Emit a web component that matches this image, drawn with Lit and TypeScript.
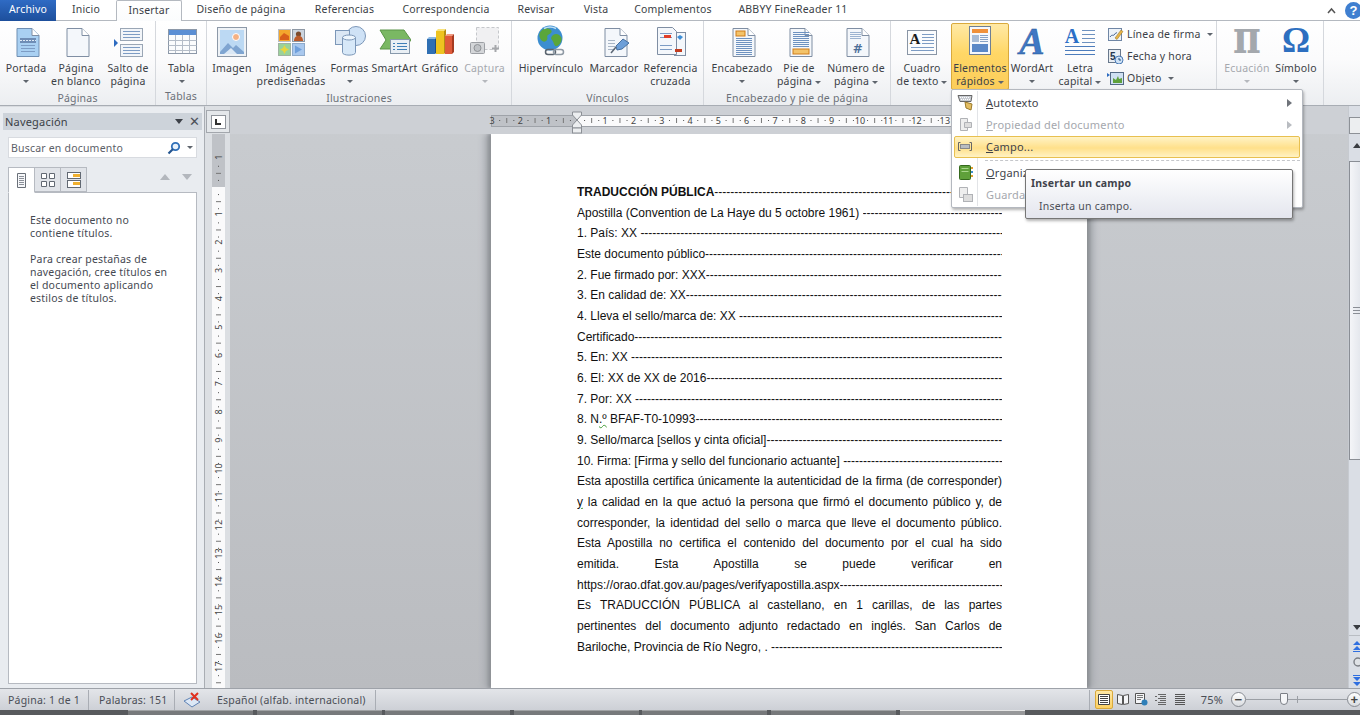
import { LitElement, html, svg, css, nothing } from 'lit';
import { customElement } from 'lit/decorators.js';
import { styleMap } from 'lit/directives/style-map.js';

const page = (extra: unknown) => svg`
  <path d="M7 3.5h15l7 7v21H7z" fill="#f4f7fb" stroke="#7f8ea3"/>
  <path d="M22 3.5v7h7" fill="#fff" stroke="#7f8ea3"/>${extra}`;

const lines = (x: number, w: number, ys: number[], c = '#7d9cc4') =>
  ys.map(y => svg`<path d="M${x} ${y}.5h${w}" stroke="${c}"/>`);

const icons: Record<string, unknown> = {
  portada: svg`
    <path d="M7 3.5h15l7 7v21H7z" fill="#a9d0f2" stroke="#6f8fb3"/>
    <path d="M22 3.5v7h7" fill="#fff" stroke="#7f8ea3"/>
    <rect x="10" y="13" width="16" height="5" fill="#6f8db5"/>
    <path d="M10 15.5h16" stroke="#dfeaf6" stroke-dasharray="2 1"/>${lines(11, 14, [20, 23, 26], '#7d9cc4')}`,
  blanco: page(nothing),
  salto: svg`
    <path d="M2 9l4 4-4 4z" fill="#2d6bc0" transform="translate(0 5)"/>
    <rect x="8.5" y="3.5" width="22" height="12" fill="#f2f5f9" stroke="#9aa6b5"/>
    <rect x="8.5" y="19.5" width="22" height="12" fill="#f2f5f9" stroke="#9aa6b5"/>
    ${lines(11, 17, [6, 9, 12])}${lines(11, 17, [22, 25, 28])}`,
  tabla: svg`
    <rect x="2.5" y="4.5" width="28" height="24" fill="#fbfcfd" stroke="#8c98a8"/>
    <rect x="3" y="5" width="27" height="5" fill="#5b8fd4"/>
    <path d="M2.5 15.5h28M2.5 20.5h28M2.5 25.5h28M9.5 10v18M16.5 10v18M23.5 10v18" stroke="#b5bdc8" fill="none"/>`,
  imagen: svg`
    <rect x="1.5" y="2.5" width="29" height="29" fill="#eef2f6" stroke="#8d99a8"/>
    <rect x="4" y="5" width="24" height="24" fill="#bcd9f3"/>
    <circle cx="20" cy="12" r="3.5" fill="#f4b183" stroke="#fff"/>
    <path d="M4 27l8-9 5 5 3-3 8 7v2H4z" fill="#7fa5d1"/>
    <path d="M8 29l7-6 6 6z" fill="#dbe8f5"/>`,
  pre: svg`
    <rect x="3.5" y="4.5" width="12" height="12" fill="#f4a72d" stroke="#b9bec6"/>
    <path d="M5 12l4-4 5 3v4H5z" fill="#d9601a"/>
    <rect x="17.5" y="4.5" width="12" height="12" fill="#ccd4de" stroke="#8e98a5"/>
    <circle cx="23.5" cy="9" r="2.6" fill="#7c4a2c"/><path d="M19 16c0-7 9-7 9 0z" fill="#bb5a2a"/>
    <rect x="3.5" y="18.5" width="12" height="12" fill="#9bd29a" stroke="#9fb3a1"/>
    <path d="M9.5 20l1.500 3 3 1.500-3 1.500-1.500 3-1.500-3-3-1.500 3-1.500z" fill="#e9d63d"/>
    <rect x="17.5" y="18.5" width="12" height="12" fill="#a9c8ee" stroke="#8eaacb"/>
    <path d="M20 20.5l7 4-7 4z" fill="#6f9fdc"/>`,
  formas: svg`
    <circle cx="22" cy="11" r="9.5" fill="#cfe2f6" stroke="#7c97b8"/>
    <rect x="1.5" y="5.5" width="14" height="14" fill="#dbe7f4" stroke="#7c97b8"/>
    <path d="M8.5 12.500v15c0 3.500 13 3.500 13 0v-15z" fill="#d7e8f8" stroke="#7c97b8"/>
    <ellipse cx="15" cy="12.5" rx="6.5" ry="2.5" fill="#eef6fd" stroke="#7c97b8"/>`,
  smartart: svg`
    <path d="M1 5h24l7 10-7 9H1l6-9z" fill="#7ab863" stroke="#5b9548"/>
    <rect x="11.5" y="14.5" width="19" height="14" fill="#e9eff5" stroke="#8798ab"/>
    ${lines(18, 10, [18, 21, 24], '#3f7fb8')}
    <path d="M14 18.500h2M14 21.500h2M14 24.500h2" stroke="#3f7fb8"/>`,
  grafico: svg`
    <path d="M3 14h8v15H3z" fill="#2f6fb3"/><path d="M3 14l2-2h8l-2 2z" fill="#8ab8e4"/><path d="M11 14l2-2v15l-2 2z" fill="#1f4d86"/>
    <path d="M12 6h8v23h-8z" fill="#eec320"/><path d="M12 6l2-2h8l-2 2z" fill="#f8e27a"/><path d="M20 6l2-2v23l-2 2z" fill="#b58d10"/>
    <path d="M21 11h7v18h-7z" fill="#df5a3a"/><path d="M21 11l2-2h7l-2 2z" fill="#f09a80"/><path d="M28 11l2-2v18l-2 2z" fill="#a63a20"/>`,
  captura: svg`
    <rect x="7.5" y="2.5" width="22" height="22" fill="#f0f0f2" stroke="#c5c7cb" stroke-dasharray="3 2"/>
    <rect x="1.5" y="17.5" width="14" height="11" rx="1" fill="#d4d6d9" stroke="#9c9fa4"/>
    <circle cx="8.5" cy="23" r="3.5" fill="#bfc2c6" stroke="#8f9296"/>
    <path d="M23 23.500h7M26.500 20v7" stroke="#a5a7ab" stroke-width="2"/>`,
  hiper: svg`
    <circle cx="15" cy="13" r="12.5" fill="#3c8ed0"/>
    <path d="M6 6c4-4 8-3 10-1s-1 4-3 5 1 4-2 6-5-1-6-3-1-5 1-7zM18 10c3-2 6-1 8 2s-1 8-4 9-3-4-5-6 0-4 1-5z" fill="#5aa63a"/>
    <path d="M9 3.500c4-2 9-1.500 12 0" stroke="#bfe0f5" fill="none" stroke-width="1.500"/>
    <rect x="10.5" y="24.5" width="10" height="5" rx="2.5" fill="none" stroke="#59636e" stroke-width="1.500"/>
    <rect x="18.5" y="24.5" width="10" height="5" rx="2.5" fill="none" stroke="#8f9aa5" stroke-width="1.500"/>`,
  marcador: page(svg`${lines(10, 7, [15, 18, 21, 24], '#a9b6c6')}
    <path d="M18 21l7-7 6 4-7 6-5 1z" fill="#6d9fd8" stroke="#466f9f"/><path d="M13 28l5-6" stroke="#5a6674" stroke-width="1.500"/>`),
  referencia: svg`
    <rect x="19.5" y="7.5" width="11" height="23" fill="#f4f7fb" stroke="#7f8ea3"/>
    <path d="M2.5 2.500h15l4 4v23h-19z" fill="#f4f7fb" stroke="#7f8ea3"/>
    ${lines(5, 12, [8, 12, 20, 24])}
    <rect x="9" y="10" width="7" height="3" fill="#e0402a"/>
    <rect x="20" y="24" width="7" height="3" fill="#c33d20"/>
    <path d="M22 12l3 3 3-3-3-2z" fill="#3e8ed6"/>`,
  encabezado: page(svg`<rect x="10" y="6" width="9" height="5" fill="#f3c36a" stroke="#d07d18"/>${lines(10, 16, [13, 15, 17, 19, 21, 23, 25, 27, 29], '#6e92c0')}`),
  pie: page(svg`${lines(10, 16, [7, 9, 11, 13, 15, 17, 19, 21], '#6e92c0')}<rect x="10" y="24" width="16" height="5" fill="#f3c36a" stroke="#d07d18"/>`),
  numero: page(svg`${lines(10, 11, [7, 9, 11, 13], '#9db4d1')}
    <text x="18" y="28" text-anchor="middle" font-family="DejaVu Sans" font-weight="700" font-size="12" fill="#4d6f99">#</text>`),
  cuadro: svg`
    <rect x="1.5" y="5.5" width="29" height="24" fill="#fbfcfd" stroke="#8995a5"/>
    <text x="9" y="19" text-anchor="middle" font-family="Liberation Serif" font-weight="700" font-size="15" fill="#1c1c1c">A</text>
    ${lines(16, 12, [9, 12, 15, 18])}${lines(5, 23, [22, 25])}`,
  elementos: svg`
    <rect x="5.5" y="1.5" width="21" height="28" fill="#f6f8fb" stroke="#6e7f95"/>
    <rect x="8" y="4" width="16" height="4" fill="#f0913a"/>
    <rect x="8" y="10" width="7" height="7" fill="#a8bcd6"/>${lines(16, 8, [10, 12, 14, 16], '#88a2c4')}
    <rect x="8" y="19" width="16" height="8" fill="#5b88c6"/>`,
  wordart: svg`
    <text x="16" y="29" text-anchor="middle" font-family="Liberation Serif" font-style="italic" font-weight="700" font-size="38" fill="#3f78c4" stroke="#1f4d90" stroke-width=".4">A</text>`,
  letra: svg`
    <text x="8" y="18" text-anchor="middle" font-family="Liberation Serif" font-weight="700" font-size="20" fill="#2b6fc7">A</text>
    ${lines(18, 13, [5, 9, 13, 17], '#6e92c0')}${lines(1, 30, [21, 25, 29], '#4c7cbc')}`,
  ecuacion: svg`
    <text transform="translate(16 28) scale(1 1.25)" text-anchor="middle" font-family="DejaVu Serif" font-weight="700" font-size="38" fill="#a4a8ad">π</text>`,
  simbolo: svg`
    <text x="16" y="27" text-anchor="middle" font-family="Liberation Serif" font-weight="700" font-size="35" fill="#2d6fc0">Ω</text>`,
};

// icons whose glyph is taller than the normal 32px box
const BIG = ['wordart', 'ecuacion', 'simbolo'];

const smallIcons: Record<string, unknown> = {
  firma: svg`<rect x="1.5" y="2.5" width="13" height="12" fill="#eef3f9" stroke="#6f86a5"/><path d="M3 11c2-3 3-1 4-2s2-3 3-2" stroke="#3a5a8c" fill="none"/><path d="M8 12l6-8 2 1.500-6 8z" fill="#e8b548" stroke="#8d6a20" stroke-width=".5"/>`,
  fecha: svg`<rect x="1.5" y="1.5" width="12" height="13" fill="#e8edf3" stroke="#68788c"/><text x="6" y="12" text-anchor="middle" font-family="Liberation Sans" font-weight="700" font-size="10" fill="#23364f">5</text><circle cx="12" cy="12" r="4" fill="#cfe2f6" stroke="#4a7ab4"/><path d="M12 10v2h2" stroke="#24507f" fill="none"/>`,
  objeto: svg`<path d="M0 3l3 2-3 2z" fill="#2d6bc0"/><rect x="3.5" y="2.5" width="13" height="12" fill="#cfe0f2" stroke="#546a85"/><path d="M6 13V8l3 2 2-4 1 3 3-1v5z" fill="#5fa13c"/>`,
};

const btn = (id: string, w: number, label: string[], caret = false, extra = '') => ({ id, w, label, caret, extra });
type Btn = ReturnType<typeof btn>;

const groups: { name: string; w: number; left: number; items: Btn[] }[] = [
  { name: 'Páginas', w: 156, left: 3, items: [
    btn('portada', 46, ['Portada'], true),
    btn('blanco', 54, ['Página', 'en blanco']),
    btn('salto', 50, ['Salto de', 'página']),
  ] },
  { name: 'Tablas', w: 51, left: 4, items: [btn('tabla', 43, ['Tabla'], true)] },
  { name: 'Ilustraciones', w: 305, left: 3, items: [
    btn('imagen', 44, ['Imagen']),
    btn('pre', 74, ['Imágenes', 'prediseñadas']),
    btn('formas', 43, ['Formas'], true),
    btn('smartart', 47, ['SmartArt']),
    btn('grafico', 44, ['Gráfico']),
    btn('captura', 45, ['Captura'], true, 'off'),
  ] },
  { name: 'Vínculos', w: 192, left: 4, items: [
    btn('hiper', 70, ['Hipervínculo']),
    btn('marcador', 56, ['Marcador']),
    btn('referencia', 57, ['Referencia', 'cruzada']),
  ] },
  { name: 'Encabezado y pie de página', w: 187, left: 4, items: [
    btn('encabezado', 68, ['Encabezado'], true),
    btn('pie', 46, ['Pie de', 'página ▾']),
    btn('numero', 68, ['Número de', 'página ▾']),
  ] },
];

const tabs: [string, number, string][] = [
  ['Archivo', 56, 'file'], ['Inicio', 60, ''], ['Insertar', 66, 'on'], ['Diseño de página', 118, ''],
  ['Referencias', 89, ''], ['Correspondencia', 114, ''], ['Revisar', 66, ''], ['Vista', 54, ''],
  ['Complementos', 100, ''], ['ABBYY FineReader 11', 140, ''],
];

const body: { t: string; k?: string }[] = [
  { t: 'TRADUCCIÓN PÚBLICA', k: 'dash bold' },
  { t: 'Apostilla (Convention de La Haye du 5 octobre 1961) ', k: 'dash' },
  { t: '1. País: XX ', k: 'dash' },
  { t: 'Este documento público', k: 'dash' },
  { t: '2. Fue firmado por: XXX', k: 'dash' },
  { t: '3. En calidad de: XX', k: 'dash' },
  { t: '4. Lleva el sello/marca de: XX ', k: 'dash' },
  { t: 'Certificado', k: 'dash' },
  { t: '5. En: XX ', k: 'dash' },
  { t: '6. El: XX de XX de 2016', k: 'dash' },
  { t: '7. Por: XX ', k: 'dash' },
  { t: '8. N.º BFAF-T0-10993', k: 'dash' },
  { t: '9. Sello/marca [sellos y cinta oficial]', k: 'dash' },
  { t: '10. Firma: [Firma y sello del funcionario actuante] ', k: 'dash' },
  { t: 'Esta apostilla certifica únicamente la autenticidad de la firma (de corresponder)', k: 'just' },
  { t: 'y la calidad en la que actuó la persona que firmó el documento público y, de', k: 'just' },
  { t: 'corresponder, la identidad del sello o marca que lleve el documento público.', k: 'just' },
  { t: 'Esta Apostilla no certifica el contenido del documento por el cual ha sido', k: 'just' },
  { t: 'emitida. Esta Apostilla se puede verificar en', k: 'just' },
  { t: 'https://orao.dfat.gov.au/pages/verifyapostilla.aspx', k: 'dash' },
  { t: 'Es TRADUCCIÓN PÚBLICA al castellano, en 1 carillas, de las partes', k: 'just' },
  { t: 'pertinentes del documento adjunto redactado en inglés. San Carlos de', k: 'just' },
  { t: 'Bariloche, Provincia de Río Negro, . ', k: 'dash' },
];

const CM = 28.3;
const DASHES = '-'.repeat(150);

@customElement('app-root')
export class AppRoot extends LitElement {
  static styles = css`
    :host { display: block; }
    * { box-sizing: border-box; }
    .app { height: 715px; width: 1360px; overflow: hidden; position: relative; display: flex; flex-direction: column;
      font-family: "Noto Sans", sans-serif; font-size: 10.5px; letter-spacing: .2px; color: #3b3f46; background: #fff; }

    .tabs { height: 21px; display: flex; align-items: stretch; border-bottom: 1px solid #b4b9c0; background: #fff; flex: none; }
    .tab { padding-top: 2px; text-align: center; height: 21px; }
    .tab.file { background: linear-gradient(#2f6bc4, #1d4f9c); color: #fff; }
    .tab.on { border: 1px solid #b4b9c0; border-bottom: 0; background: linear-gradient(#fff, #fbfcfd); border-radius: 2px 2px 0 0; }
    .tabs-end { flex: 1; display: flex; justify-content: flex-end; align-items: center; gap: 9px; margin-right: -2px; }
    .help { width: 17px; height: 17px; border-radius: 50%; background: #3f7fd0; color: #fff; font: 700 13px/17px "Liberation Sans", sans-serif; text-align: center; }

    .ribbon { height: 85px; display: flex; flex: none; background: linear-gradient(#fff 0, #fbfbfc 45%, #eceef1 100%); border-bottom: 1px solid #a8adb4; }
    .group { display: flex; flex-direction: column; border-right: 1px solid #d5d8dd; flex: none; padding-top: 2px; }
    .group-items { flex: 1; display: flex; }
    .group-name { height: 18px; text-align: center; color: #6b7078; line-height: 19px; }
    .rb { display: flex; flex-direction: column; align-items: center; flex: none; text-align: center; line-height: 13.3px; }
    .rb svg { width: 32px; height: 32px; margin-top: 2px; margin-bottom: 5px; flex: none; }
    .rb svg.big { width: 52px; height: 52px; margin-top: -8px; margin-bottom: -5px; }
    .rb.off { color: #a5a8ae; }
    .rb.hot { background: linear-gradient(#ffe9a6, #ffd766 45%, #fccd5a); border: 1px solid #d9a93c; border-radius: 2px; margin-left: 1px; }
    .rb.hot svg { margin-top: 1px; }
    .caret { display: block; width: 0; height: 0; border: 3px solid transparent; border-top: 3px solid #5f656d; border-bottom: 0; margin: 5px auto 0; }
    .rb.off .caret { border-top-color: #b5b8bd; }
    .inl { display: inline-block; vertical-align: middle; margin: 0 0 0 3px; }
    .smalls { width: 108px; display: flex; flex-direction: column; gap: 6px; padding: 3px 0 0 2px; flex: none; }
    .sm { display: flex; align-items: center; height: 16px; gap: 3px; white-space: nowrap; }
    .sm svg { width: 17px; height: 16px; flex: none; }

    .main { flex: 1; display: flex; min-height: 0; background: #bcbfc4; }
    .nav { width: 205px; flex: none; background: #e9ecf0; padding: 6px 2px 0 3px; display: flex; flex-direction: column; border-top: 1px solid #d9dce0; border-right: 1px solid #a9adb3; }
    .nav-title { height: 17px; display: flex; align-items: center; justify-content: space-between; background: #cdd3da; padding: 0 2px; font-size: 11px; flex: none; }
    .nav-ctl { display: flex; gap: 6px; align-items: center; color: #4c5058; }
    .tri { width: 0; height: 0; border: 4.5px solid transparent; border-top: 5px solid #3d4148; border-bottom: 0; }
    .x { font: 700 13px/12px "DejaVu Sans", sans-serif; }
    .search { margin: 7px 5px 0 5px; height: 21px; background: #fff; border: 1px solid #d8dbe0; display: flex; align-items: center; justify-content: space-between; padding: 0 3px 0 2px; color: #5c6068; font-size: 10.5px; flex: none; }
    .search-r { display: flex; align-items: center; gap: 6px; }
    .nav-tabs { display: flex; margin: 9px 5px 0 5px; height: 25px; position: relative; flex: none; align-items: flex-start; }
    .nt { width: 26px; height: 25px; border: 1px solid #b6bac1; border-left: 0; display: flex; align-items: center; justify-content: center; background: #e1e4e9; }
    .nt.on { width: 27px; border-left: 1px solid #b6bac1; background: #fff; border-bottom-color: #fff; height: 26px; z-index: 1; }
    .nav-arrows { flex: 1; display: flex; justify-content: flex-end; gap: 12px; padding: 7px 5px 0 0; }
    .up, .down { width: 0; height: 0; border: 5px solid transparent; }
    .up { border-bottom: 6px solid #b3b7bd; border-top: 0; }
    .down { border-top: 6px solid #b3b7bd; border-bottom: 0; }
    .nav-body { flex: 1; margin: 0 5px 4px 5px; background: #fff; border: 1px solid #b6bac1; padding: 21px 20px 0 21px; font-size: 10.5px; line-height: 13px; color: #454952; }
    .nav-body p { margin: 0 0 13px; }

    .vstrip { width: 25px; flex: none; display: flex; flex-direction: column; background: #dcdfe3; align-items: flex-start; }
    .corner { width: 24px; height: 23px; margin-top: 4px; margin-left: 1px; background: #e4e7ea; border: 1px solid #a3a7ad; display: flex; align-items: center; justify-content: center; flex: none; }
    .corner i { width: 15px; height: 14px; border: 1px solid #8f949b; background: #fff; display: flex; align-items: center; justify-content: center; }
    .corner b { display: block; width: 6px; height: 6px; border-left: 2px solid #333; border-bottom: 2px solid #333; }
    .vstrip svg { display: block; margin-left: 7px; margin-top: 1px; }

    .work { flex: 1; display: flex; flex-direction: column; min-width: 0; background: linear-gradient(#c9ccd0, #babcc0); }
    .hband { height: 28px; flex: none; background: #cdd0d5; padding: 9px 0 0 261px; }
    .hband svg { display: block; overflow: visible; }
    .doc { flex: 1; min-height: 0; padding-left: 261px; display: flex; overflow: hidden; }
    .sheet { width: 596px; background: #fff; flex: none; box-shadow: -3px 0 3px #8f9297, 3px 0 3px #8f9297, -7px 0 6px #a9acb1, 7px 0 6px #a9acb1; padding: 48px 85px 0 86px;
      font-family: "Liberation Sans", Arial, sans-serif; font-size: 12px; letter-spacing: 0; color: #111; }
    .ln { height: 20.68px; line-height: 20.68px; white-space: nowrap; overflow: hidden; }
    .ln.dash { display: flex; }
    .ln.dash .d { flex: 1; min-width: 0; overflow: hidden; }
    .ln.bold .t { font-weight: 700; }
    .ln.just { white-space: normal; text-align: justify; text-align-last: justify; }
    .squig { text-decoration: underline wavy #3f9a35 1px; }
    .t { white-space: pre; flex: none; }

    .vscroll { width: 12px; flex: none; background: #dadee5; display: flex; flex-direction: column; overflow: hidden; border-left: 1px solid #c6cad0; }
    .vs-ruler { width: 12px; height: 17px; margin-top: 11px; border: 1px solid #8d9197; border-right: 0; background: #eceef0; flex: none; }
    .vs-up { margin: 9px 0 0 4px; width: 0; height: 0; border: 4px solid transparent; border-bottom: 5px solid #3a3d42; border-top: 0; flex: none; }
    .vs-thumb { width: 12px; height: 299px; background: linear-gradient(90deg, #f4f5f8, #e3e6ec); border: 1px solid #8a8e95; border-right: 0; margin-top: 13px; flex: none; display: flex; align-items: center; padding-left: 3px; }
    .vs-thumb i { display: block; width: 8px; height: 7px; border-top: 1px solid #8a8e95; border-bottom: 1px solid #8a8e95; background: linear-gradient(transparent 2px, #8a8e95 2px, #8a8e95 3px, transparent 3px); }
    .vs-bottom { margin-top: auto; display: flex; flex-direction: column; align-items: flex-start; padding-left: 3px; height: 63px; }
    .vs-bottom .vs-down { margin-left: 1px; width: 0; height: 0; border: 4px solid transparent; border-top: 5px solid #3a3d42; border-bottom: 0; flex: none; }
    .vs-bottom hr { margin: 5px 0 5px -3px; width: 12px; border: 0; border-top: 1px solid #b9bdc3; flex: none; }
    .vs-bottom svg { display: block; flex: none; }

    .status { height: 22px; flex: none; display: flex; align-items: center; background: linear-gradient(#e3e5e9, #cdd0d6); border-top: 1px solid #9ea2a9; font-size: 10.5px; color: #4a4e56; }
    .st { height: 20px; display: flex; align-items: center; border-right: 1px solid #a9adb4; flex: none; }
    .st-end { flex: 1; display: flex; align-items: center; justify-content: flex-end; height: 20px; margin-right: -1px; }
    .view { width: 18px; height: 19px; display: flex; align-items: center; justify-content: center; margin-right: 1px; flex: none; }
    .view.on { background: linear-gradient(#ffe9a6, #fcd062); border: 1px solid #d9a93c; border-radius: 2px; }
    .zoombtn { width: 15px; height: 15px; border-radius: 50%; border: 1px solid #878b92; background: linear-gradient(#fff, #d9dce0); display: flex; align-items: center; justify-content: center; font: 700 13px/1 "Liberation Sans", sans-serif; color: #444; flex: none; }
    .slider { width: 101px; height: 1px; background: #9b9fa5; position: relative; flex: none; }
    .mid { position: absolute; left: 51px; top: -3px; width: 1px; height: 7px; background: #9b9fa5; }
    .thumb { position: absolute; left: 34px; top: -6px; width: 8px; height: 12px; background: #f5f6f8; border: 1px solid #7b7f86; border-radius: 1px 1px 4px 4px; }

    .taskbar { height: 5px; flex: none; background: #585a5d; display: flex; padding-left: 128px; gap: 3.6px; }
    .task { width: 125px; background: #77797b; border-top: 1px solid #a0a2a4; }
    .task.on { background: #97989a; border-top-color: #e6e6e6; }

    .menu { position: absolute; left: 951px; top: 89px; width: 352px; height: 119px; background: #fff; border: 1px solid #b4b8bf; border-radius: 2px; box-shadow: 1px 2px 3px rgba(0,0,0,.3); padding: 2px; font-size: 11px; color: #3e424a; }
    .menu::before { content: ''; position: absolute; left: 25px; top: 1px; bottom: 1px; width: 1px; background: #e2e4e7; }
    .mi { height: 22px; display: flex; align-items: center; position: relative; padding: 0 0 2px 32px; }
    .mi svg { position: absolute; left: 3px; top: 2px; width: 17px; height: 17px; }
    .mi.off { color: #a5a8ae; }
    .mi.hot { background: linear-gradient(#fff3c6, #ffe08a 55%, #fff2c4); border: 1px solid #e8c050; border-radius: 2px; padding: 0 0 1px 31px; }
    .mi.hot svg { left: 2px; top: 1px; }
    .mi u { text-underline-offset: 1px; }
    .sub { position: absolute; right: 8px; top: 7px; width: 0; height: 0; border: 4px solid transparent; border-left: 5px solid #6f737a; border-right: 0; }
    .mi.off .sub { border-left-color: #b9bcc1; }
    .sep { height: 3px; margin: 0 0 1px 31px; border-bottom: 1px dashed #c5c7cb; }

    .tip { position: absolute; left: 1025px; top: 169px; width: 268px; height: 50px; background: linear-gradient(#fff, #e4e6ee); border: 1px solid #767676; border-radius: 2px; box-shadow: 1px 2px 3px rgba(0,0,0,.3); padding: 6px 5px; font-size: 10.5px; color: #4b4f57; }
    .tip b { display: block; margin-bottom: 9px; font-weight: 700; color: #3f434b; }
    .tip span { padding-left: 8px; }
  `;

  private icon(id: string) {
    if (BIG.includes(id)) return html`<svg class="big" viewBox="-10 -10 52 52">${icons[id]}</svg>`;
    return html`<svg viewBox="0 0 32 32">${icons[id]}</svg>`;
  }

  private rbutton(b: Btn) {
    const label = b.label.map(l => {
      if (l.endsWith(' ▾')) return html`<div>${l.slice(0, -2)}<span class="caret inl"></span></div>`;
      return html`<div>${l}</div>`;
    });
    return html`<div class="rb ${b.extra}" style=${styleMap({ width: `${b.w}px` })}>
      ${this.icon(b.id)}${label}${b.caret ? html`<span class="caret"></span>` : nothing}
    </div>`;
  }

  private hruler() {
    const width = 596;
    const x0 = 86;
    const cells = [];
    for (let i = -3; i <= 18; i++) {
      const x = x0 + i * CM;
      if (x < -2 || x > width) continue;
      if (i !== 0) cells.push(svg`<text x="${x}" y="9" text-anchor="middle" font-family="Noto Sans" font-size="9" fill="#444">${Math.abs(i)}</text>`);
      for (const q of [.25, .75]) cells.push(svg`<rect x="${x + q * CM}" y="5" width="1" height="1" fill="#555"/>`);
      cells.push(svg`<rect x="${x + .5 * CM}" y="3" width="1" height="5" fill="#777"/>`);
    }
    return html`<svg width="596" height="12" viewBox="0 0 596 12">
      <rect x=".5" y=".5" width="595" height="11" fill="#bfc2c7" stroke="#9fa3a9"/>
      <rect x="86" y="1" width="425" height="10" fill="#fafafb"/>
      ${cells}
      <path d="M81.5-3h9v3l-4.500 5-4.500-5z" fill="#eceef0" stroke="#8b8f95"/>
      <path d="M81.5 13v-3l4.500-5 4.500 5v3z" fill="#eceef0" stroke="#8b8f95"/>
      <rect x="81.5" y="13" width="9" height="5" fill="#eceef0" stroke="#8b8f95"/>
    </svg>`;
  }

  private vruler() {
    const cells = [];
    const zero = 53;
    for (let i = -1; i <= 18; i++) {
      const y = zero + i * CM;
      if (i !== 0 && y < 554) cells.push(svg`<text transform="translate(9.5 ${y - 1.5}) rotate(-90)" text-anchor="middle" font-family="Noto Sans" font-size="9" fill="#444">${Math.abs(i)}</text>`);
      for (const q of [.25, .75]) cells.push(svg`<rect x="6" y="${y + q * CM}" width="1" height="1" fill="#555"/>`);
      cells.push(svg`<rect x="4" y="${y + .5 * CM}" width="5" height="1" fill="#777"/>`);
    }
    return html`<svg width="13" height="554" viewBox="0 0 13 554">
      <rect width="13" height="554" fill="#fafafb"/>
      <rect width="13" height="53" fill="#bfc2c7"/>
      ${cells}
    </svg>`;
  }

  private line(l: { t: string; k?: string }, i: number) {
    const k = l.k ?? '';
    if (k.includes('dash')) {
      const text = i === 11
        ? html`8. N<span class="squig">.º</span> BFAF-T0-10993`
        : l.t;
      return html`<div class="ln ${k}"><span class="t">${text}</span><span class="d">${DASHES}</span></div>`;
    }
    if (i === 15) {
      return html`<div class="ln ${k}"><span class="squig">y</span> ${l.t.slice(2)}</div>`;
    }
    return html`<div class="ln ${k}">${l.t}</div>`;
  }

  render() {
    return html`<div class="app">
      <div class="tabs">
        ${tabs.map(([n, w, c]) => html`<div class="tab ${c}" style=${styleMap({ width: `${w}px` })}>${n}</div>`)}
        <div class="tabs-end">
          <svg width="9" height="7" viewBox="0 0 9 7"><path d="M1 6l3.500-4L8 6" fill="none" stroke="#555" stroke-width="1.500"/></svg>
          <span class="help">?</span>
        </div>
      </div>

      <div class="ribbon">
        ${groups.map(g => html`<div class="group" style=${styleMap({ width: `${g.w}px` })}>
          <div class="group-items" style=${styleMap({ paddingLeft: `${g.left}px` })}>${g.items.map(b => this.rbutton(b))}</div>
          <div class="group-name">${g.name}</div>
        </div>`)}
        <div class="group" style="width:326px">
          <div class="group-items" style="padding-left:3px">
            ${this.rbutton(btn('cuadro', 56, ['Cuadro', 'de texto ▾']))}
            ${this.rbutton(btn('elementos', 58, ['Elementos', 'rápidos ▾'], false, 'hot'))}
            ${this.rbutton(btn('wordart', 46, ['WordArt'], true))}
            ${this.rbutton(btn('letra', 50, ['Letra', 'capital ▾']))}
            <div class="smalls">
              <div class="sm"><svg viewBox="0 0 17 16">${smallIcons.firma}</svg>Línea de firma<span class="caret inl"></span></div>
              <div class="sm"><svg viewBox="0 0 17 16">${smallIcons.fecha}</svg>Fecha y hora</div>
              <div class="sm"><svg viewBox="0 0 17 16">${smallIcons.objeto}</svg>Objeto<span class="caret inl"></span></div>
            </div>
          </div>
          <div class="group-name"></div>
        </div>
        <div class="group" style="width:107px">
          <div class="group-items" style="padding-left:5px">
            ${this.rbutton(btn('ecuacion', 50, ['Ecuación'], true, 'off'))}
            ${this.rbutton(btn('simbolo', 48, ['Símbolo'], true))}
          </div>
          <div class="group-name"></div>
        </div>
      </div>

      <div class="main">
        <div class="nav">
          <div class="nav-title">Navegación
            <div class="nav-ctl"><span class="tri"></span><span class="x">✕</span></div>
          </div>
          <div class="search">Buscar en documento
            <div class="search-r">
              <svg width="14" height="14" viewBox="0 0 14 14"><circle cx="8.5" cy="5.5" r="3.7" fill="#eaf3fb" stroke="#2f6fb8" stroke-width="1.8"/><path d="M6 8l-4.500 4.500" stroke="#23548f" stroke-width="2.2"/></svg>
              <span class="caret" style="margin:0"></span>
            </div>
          </div>
          <div class="nav-tabs">
            <div class="nt on"><svg width="9" height="15" viewBox="0 0 9 15"><path d="M.5.500h8v14h-8z" fill="#f7f8fa" stroke="#6a7079"/><path d="M2 3.500h5M2 5.500h5M2 7.500h5M2 9.500h5M2 11.500h5" stroke="#8b9099"/></svg></div>
            <div class="nt"><svg width="14" height="14" viewBox="0 0 14 14"><path d="M.5.500h5v5h-5zM8.500.500h5v5h-5zM.5 8.500h5v5h-5zM8.500 8.500h5v5h-5z" fill="#fff" stroke="#626973"/></svg></div>
            <div class="nt"><svg width="14" height="16" viewBox="0 0 14 16"><rect x=".5" y=".5" width="13" height="6" fill="#fff" stroke="#626973"/><rect x=".5" y="8.5" width="13" height="7" fill="#fff" stroke="#626973"/><rect x="6" y="2" width="7" height="3" fill="#f0b030"/><rect x="6" y="10" width="7" height="3" fill="#f0b030"/></svg></div>
            <div class="nav-arrows"><span class="up"></span><span class="down"></span></div>
          </div>
          <div class="nav-body">
            <p>Este documento no contiene títulos.</p>
            <p>Para crear pestañas de navegación, cree títulos en el documento aplicando estilos de títulos.</p>
          </div>
        </div>

        <div class="vstrip">
          <div class="corner"><i><b></b></i></div>
          ${this.vruler()}
        </div>

        <div class="work">
          <div class="hband">${this.hruler()}</div>
          <div class="doc">
            <div class="sheet">${body.map((l, i) => this.line(l, i))}</div>
          </div>
        </div>

        <div class="vscroll">
          <div class="vs-ruler"></div>
          <span class="vs-up"></span>
          <div class="vs-thumb"><i></i></div>
          <div class="vs-bottom">
            <span class="vs-down"></span>
            <hr />
            <svg width="10" height="11" viewBox="0 0 10 11"><path d="M1 4l4-4 4 4zM1 9l4-4 4 4zM1 10h8v1H1z" fill="#2f6fe0"/></svg>
            <svg style="margin-top:5px" width="10" height="10" viewBox="0 0 10 10"><circle cx="6" cy="5" r="4" fill="#dfe2e6" stroke="#7b7f85" stroke-width="1.4"/></svg>
            <svg style="margin-top:8px" width="10" height="11" viewBox="0 0 10 11"><path d="M1 0h8v1H1zM1 2h8l-4 4zM1 7h8l-4 4z" fill="#2f6fe0"/></svg>
          </div>
        </div>
      </div>

      <div class="status">
        <div class="st" style="width:89px;padding-left:8px">Página: 1 de 1</div>
        <div class="st" style="width:86px;padding-left:10px">Palabras: 151</div>
        <div class="st" style="width:201px;padding-left:8px">
          <svg width="18" height="16" viewBox="0 0 18 16"><path d="M1 9l8-4 8 5-8 5z" fill="#dce8f6" stroke="#5f83b5"/><path d="M8 1l7 7M15 1L8 8" stroke="#e0301e" stroke-width="2"/></svg>
          <span style="margin-left:16px">Español (alfab. internacional)</span>
        </div>
        <div class="st-end">
          <div class="st" style="height:20px;width:1px;margin-right:5px"></div>
          <div class="view on"><svg width="12" height="11" viewBox="0 0 12 11"><path d="M.5.500h11v10H.5z" fill="#fff" stroke="#444"/><path d="M2 2.500h8M2 4.500h8M2 6.500h8M2 8.500h8" stroke="#444"/></svg></div>
          <div class="view"><svg width="12" height="12" viewBox="0 0 12 12"><path d="M.5.500l5 1v9l-5-1zM11.500.500l-5 1v9l5-1z" fill="#f5f6f8" stroke="#555"/></svg></div>
          <div class="view"><svg width="13" height="13" viewBox="0 0 13 13"><path d="M.5.500h9v10h-9z" fill="#f5f6f8" stroke="#555"/><path d="M2 2.500h6M2 4.500h6M2 6.500h4" stroke="#777"/><circle cx="9.5" cy="9.5" r="3" fill="#2f7fb8"/></svg></div>
          <div class="view"><svg width="12" height="11" viewBox="0 0 12 11"><path d="M3 .500h8M0 2.500h2M5 2.500h6M3 4.500h8M0 6.500h2M5 6.500h6M3 8.500h8M3 10.500h8" stroke="#666"/></svg></div>
          <div class="view"><svg width="12" height="11" viewBox="0 0 12 11"><path d="M1 .500h10M1 2.500h10M1 4.500h10M1 6.500h10M1 8.500h10M1 10.500h10" stroke="#555"/></svg></div>
          <span style="margin:0 8px 0 11px;font-size:11px">75%</span>
          <div class="zoombtn">−</div>
          <div class="slider"><span class="mid"></span><span class="thumb"></span></div>
          <div class="zoombtn" style="margin-right:-1px">+</div>
        </div>
      </div>

      <div class="taskbar">${[0, 1, 2, 3, 4, 5, 6].map(i => html`<span class="task ${i === 6 ? 'on' : ''}"></span>`)}</div>

      <div class="menu">
        <div class="mi"><svg viewBox="0 0 17 17"><path d="M1 1.500h14l-1 6H3z" fill="#c8ccd2" stroke="#666"/><path d="M3 3.500h10M4 5.500h9" stroke="#fff" stroke-dasharray="1 1"/><path d="M8 8l7 2-1 6-5-2z" fill="#e3bd63" stroke="#9a7a2a"/></svg><span><u>A</u>utotexto</span><span class="sub"></span></div>
        <div class="mi off"><svg viewBox="0 0 17 17"><path d="M3.500 2.500h7v12h-7z" fill="#eee" stroke="#b0b2b6"/><path d="M7.500 6.500h7v5h-7z" fill="#ddd" stroke="#b0b2b6"/></svg><span><u>P</u>ropiedad del documento</span><span class="sub"></span></div>
        <div class="mi hot"><svg viewBox="0 0 17 17"><path d="M3.500 4.500h-2v8h2M12.500 4.500h2v8h-2" fill="none" stroke="#666"/><rect x="3.500" y="6.500" width="9" height="4" fill="#b9bcc1" stroke="#888"/></svg><span><u>C</u>ampo...</span></div>
        <div class="sep"></div>
        <div class="mi"><svg viewBox="0 0 17 17"><rect x="2.500" y="1.500" width="11" height="14" rx="1" fill="#5fa03a" stroke="#35691d"/><path d="M4.500 4.500h7M4.500 7.500h7" stroke="#a9d78c"/><path d="M15 3v2" stroke="#e0a030" stroke-width="2"/><path d="M15 7v2" stroke="#3f8fd0" stroke-width="2"/><path d="M15 11v2" stroke="#e0a030" stroke-width="2"/></svg><span><u>O</u>rganizador de bloques de creación...</span></div>
        <div class="mi off"><svg viewBox="0 0 17 17"><path d="M2.500 1.500h8v10h-8z" fill="#eee" stroke="#b0b2b6"/><rect x="6.500" y="8.500" width="9" height="7" fill="#ddd" stroke="#b0b2b6"/></svg><span>Guardar selección en la galería de elementos rápidos...</span></div>
      </div>

      <div class="tip"><b>Insertar un campo</b><span>Inserta un campo.</span></div>
    </div>`;
  }
}
